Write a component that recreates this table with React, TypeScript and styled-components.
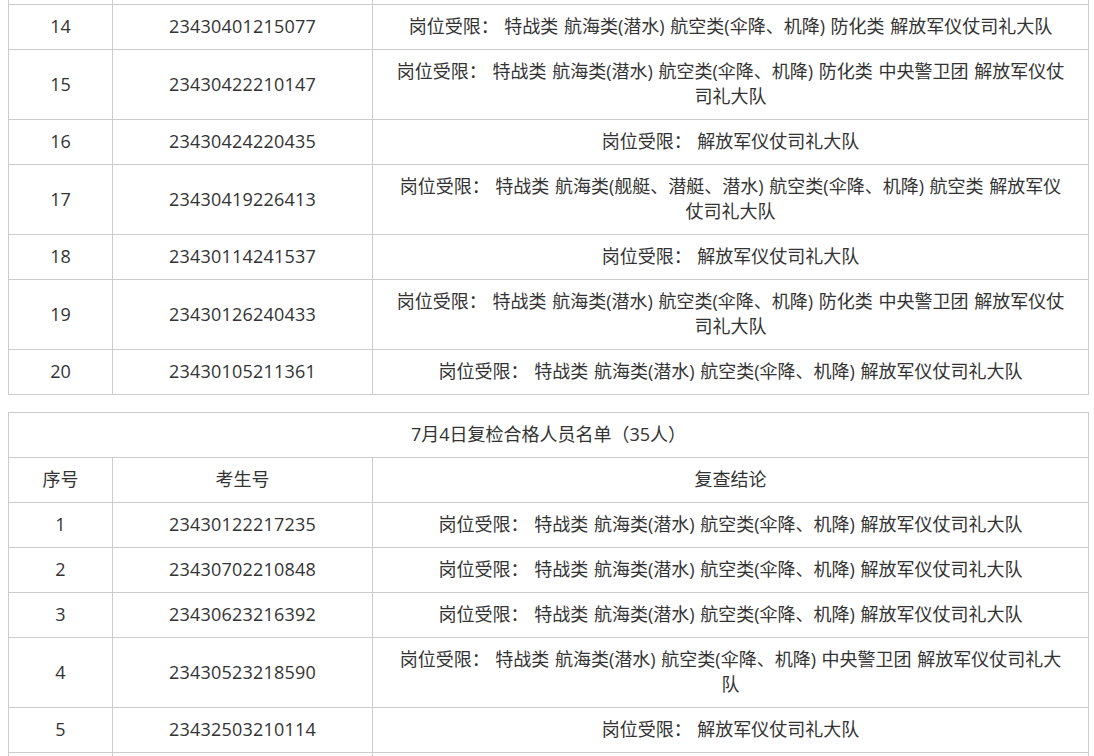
import styled, { createGlobalStyle } from "styled-components";

const GlobalStyle = createGlobalStyle`
  html, body {
    margin: 0;
    padding: 0;
    background: #fff;
    overflow: hidden;
  }
  body {
    font-family: "Open Sans", "Noto Sans CJK SC", sans-serif;
    color: #333;
  }
`;

type Row = [string, string, string];

const LIMIT = "岗位受限： ";

const firstRows: Row[] = [
  ["13", "23430403210562", LIMIT + "解放军仪仗司礼大队"],
  ["14", "23430401215077", LIMIT + "特战类 航海类(潜水) 航空类(伞降、机降) 防化类 解放军仪仗司礼大队"],
  ["15", "23430422210147", LIMIT + "特战类 航海类(潜水) 航空类(伞降、机降) 防化类 中央警卫团 解放军仪仗司礼大队"],
  ["16", "23430424220435", LIMIT + "解放军仪仗司礼大队"],
  ["17", "23430419226413", LIMIT + "特战类 航海类(舰艇、潜艇、潜水) 航空类(伞降、机降) 航空类 解放军仪仗司礼大队"],
  ["18", "23430114241537", LIMIT + "解放军仪仗司礼大队"],
  ["19", "23430126240433", LIMIT + "特战类 航海类(潜水) 航空类(伞降、机降) 防化类 中央警卫团 解放军仪仗司礼大队"],
  ["20", "23430105211361", LIMIT + "特战类 航海类(潜水) 航空类(伞降、机降) 解放军仪仗司礼大队"],
];

const secondRows: Row[] = [
  ["1", "23430122217235", LIMIT + "特战类 航海类(潜水) 航空类(伞降、机降) 解放军仪仗司礼大队"],
  ["2", "23430702210848", LIMIT + "特战类 航海类(潜水) 航空类(伞降、机降) 解放军仪仗司礼大队"],
  ["3", "23430623216392", LIMIT + "特战类 航海类(潜水) 航空类(伞降、机降) 解放军仪仗司礼大队"],
  ["4", "23430523218590", LIMIT + "特战类 航海类(潜水) 航空类(伞降、机降) 中央警卫团 解放军仪仗司礼大队"],
  ["5", "23432503210114", LIMIT + "解放军仪仗司礼大队"],
  ["6", "23430612213321", LIMIT + "解放军仪仗司礼大队"],
];

const App = () => {
  return (
    <>
      <GlobalStyle />
      <Page>
        <Table $offset={-41}>
          <Cols />
          <tbody>
            {firstRows.map(([no, id, result]) => (
              <tr key={no}>
                <Cell>{no}</Cell>
                <Cell $num>{id}</Cell>
                <Cell $wide>{result}</Cell>
              </tr>
            ))}
          </tbody>
        </Table>

        <Table $offset={17}>
          <Cols />
          <tbody>
            <tr>
              <Cell colSpan={3}>7月4日复检合格人员名单（35人）</Cell>
            </tr>
            <tr>
              <Cell>序号</Cell>
              <Cell>考生号</Cell>
              <Cell>复查结论</Cell>
            </tr>
            {secondRows.map(([no, id, result]) => (
              <tr key={no}>
                <Cell>{no}</Cell>
                <Cell $num>{id}</Cell>
                <Cell $wide>{result}</Cell>
              </tr>
            ))}
          </tbody>
        </Table>
      </Page>
    </>
  );
};

const Cols = () => (
  <colgroup>
    <col style={{ width: 104 }} />
    <col style={{ width: 260 }} />
    <col style={{ width: 716 }} />
  </colgroup>
);

export default App;

const Page = styled.div`
  padding: 0 8px;
  display: flex;
  flex-direction: column;
  align-items: flex-start;
`;

const Table = styled.table<{ $offset: number }>`
  width: 1080px;
  margin-top: ${(p) => p.$offset}px;
  border-collapse: collapse;
  table-layout: fixed;
  font-size: 18px;
`;

const Cell = styled.td<{ $wide?: boolean; $num?: boolean }>`
  border: 1px solid #cccccc;
  padding: 9px 20px 10px;
  line-height: 25px;
  text-align: center;
  vertical-align: middle;
  color: #333;
  word-break: break-all;
  word-spacing: ${(p) => (p.$wide ? "1px" : "0")};
  letter-spacing: ${(p) => (p.$num ? "0.2px" : "0")};
`;
